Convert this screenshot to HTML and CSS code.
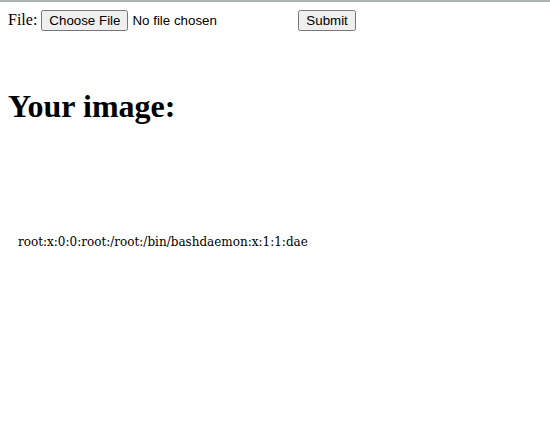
FILE: index.html
```html
<!DOCTYPE html>
<html>
<head>
<meta charset="utf-8">
<link rel="stylesheet" href="styles.css">
</head>
<body>
<form class="upload">
File: <input type="file" name="file"> <input type="submit" value="Submit">
</form>
<br><br>
<h1 class="title">Your image:</h1>
<div class="image">root:x:0:0:root:/root:/bin/bashdaemon:x:1:1:dae</div>
</body>
</html>
```
FILE: styles.css
```css
html {
  border-top: 2px solid #a9b3b3;
}
body {
  font-family: "Liberation Serif", serif;
}
.image {
  font-family: "DejaVu Serif", serif;
  font-size: 12px;
  padding: 88px 0 0 10px;
}
```
